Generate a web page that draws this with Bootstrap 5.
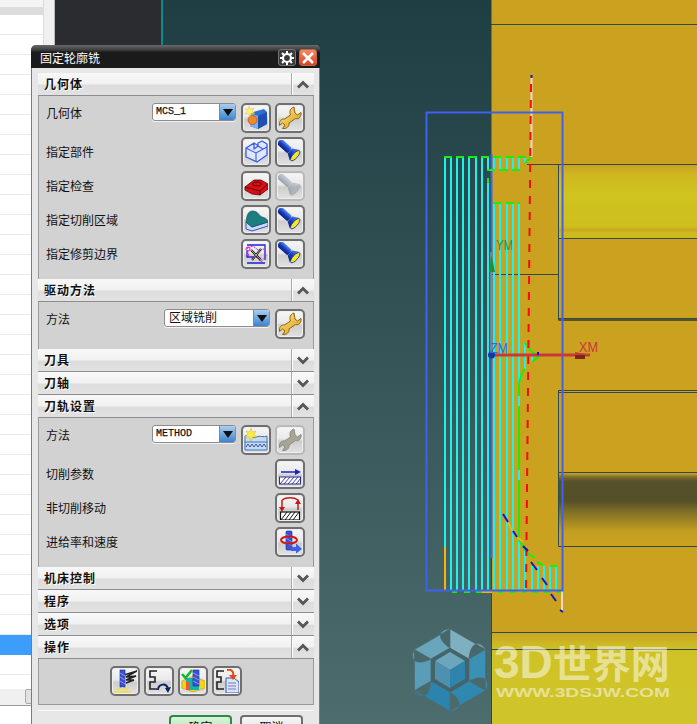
<!DOCTYPE html>
<html lang="zh"><head><meta charset="utf-8"><title>固定轮廓铣</title>
<link href="https://cdn.jsdelivr.net/npm/bootstrap@5.3.0/dist/css/bootstrap.min.css" rel="stylesheet">
<style>
html,body{margin:0;height:100%;overflow:hidden;background:#222}
body{font-family:"Liberation Sans","Noto Sans CJK SC",sans-serif;font-size:12px;color:#111}
.desk{position:relative;width:697px;height:724px;overflow:hidden}
.tree{width:43px;background:#fff;flex:none}
.tree-head{height:15px;background:linear-gradient(#f4f4f4 0 7px,#dcdcdc 7px)}
.tree-rows{height:674px;background:repeating-linear-gradient(#fff 0 19px,#e9e9e9 19px 20px);padding-top:620px}
.tree-sel{height:20px;background:#3d9dfb}
.tree-bar{height:17px;background:#f0f0f0;border-bottom:1px solid #999;padding-left:25px}
.tree-thumb{width:12px;height:15px;background:#e2e2e2;border:1px solid #aaa;border-radius:2px}
.tree-strip{width:12px;flex:none;background:#f0f0f0;border-right:1px solid #bbb;border-left:1px solid #ddd}
.dark-col{width:108px;flex:none;background:#2a2c2f;border-right:2px solid #0b8a90}
.viewport{background:linear-gradient(#1f3e43,#4d6c6d)}
.viewport svg{display:block}
.dlg{position:absolute;left:31px;top:45px;width:289px;height:690px;background:#e7e7e7;border:1px solid #7c7c7c;border-top:0;border-radius:5px 5px 0 0}
.dlg-title{height:23px;margin:0 -1px;padding:5px 3px 0 9px;color:#fff;border-radius:5px 5px 0 0;background:linear-gradient(#6a6a6a,#3c3c3c 5px,#303030 6px,#1a1a1a 7px,#1a1a1a);line-height:1}
.dlg-title span{padding-top:3px;font-size:12px}
.tbtn{width:18px;height:17px;border-radius:3px;margin-top:-1px}
.tbtn-gear{background:#3a3a3a;border:1px solid #777}
.tbtn-close{background:linear-gradient(#f58a60,#e0401e);border:1px solid #b86a50;margin-left:3px}
.dlg-inner{margin:5px 5px 0 6px}
.sec-head{height:23px;background:linear-gradient(#f8f8f8,#f1f1f1 50%,#dcdcdc 55%,#e2e2e2);border-bottom:1px solid #8d8d8d;font-weight:700;letter-spacing:1px;padding-left:6px}
.sec-head .ttl{text-shadow:1px 1px 0 #fff;padding-top:2px}
.sec-chev{width:23px;height:22px;border-left:1px solid #a8a8a8;box-shadow:inset 1px 0 0 #fff}
.sec-body{background:#d2d2d2;border-left:1px solid #9a9a9a;border-right:1px solid #9a9a9a;padding:7px 8px 10px 7px}
.sec-last{border-bottom:1px solid #9a9a9a;padding-bottom:8px}
.ro{height:30px;margin-bottom:4px;gap:4px}
.ro:last-child{margin-bottom:0}
.lbl{flex-grow:1;padding-top:1px}
.lbl-up{position:relative;top:-5px}
.tool{width:30px;height:30px;padding:0;border:2px solid #6f6f6f;border-radius:5px;background:linear-gradient(#f6f6f6,#e9e9e9 45%,#cdcdcd 55%,#e2e2e2);box-shadow:0 0 0 1px #eee inset;flex:none;--bs-btn-disabled-opacity:1}
.tool:disabled{border-color:#b9b9b9}
.tool svg{display:block;margin:1px}
.combo{height:18px;background:#fff;border:1px solid #8c8c8c;border-radius:3px;box-shadow:0 1px 0 #f2f2f2;align-self:flex-start;margin-right:1px;overflow:hidden}
.combo-a{width:84px}.combo-b{width:106px}
.combo-t{flex-grow:1;padding-left:3px;font:400 10px/16px "Liberation Mono",monospace;-webkit-text-stroke:.25px #111}
.combo-c{flex-grow:1;padding-left:4px;font-size:12px;line-height:17px}
.combo-arr{width:16px;background:linear-gradient(#a9cdf1,#3d84cf);border-left:1px solid #5a8fc8}
.foot{margin-top:5px;border-top:1px solid #f8f8f8;padding:4px 11px 0 0;gap:8px}
.act{width:63px;height:26px;padding:0;border-radius:4px;border:2px solid #6f6f6f;font-size:12px;line-height:20px;color:#111;background:linear-gradient(#f6f6f6,#dcdcdc)}
.act-ok{border-color:#2c8a48;background:linear-gradient(#d8f3d8,#a9dfae)}
</style></head>
<body>
<svg width="0" height="0" class="d-block position-absolute">
<defs>
<linearGradient id="gBlue" x1="0" y1="0" x2="0" y2="1"><stop offset="0" stop-color="#5b8cf0"/><stop offset=".5" stop-color="#1b3fc0"/><stop offset="1" stop-color="#0a1f80"/></linearGradient>
<linearGradient id="gGold" x1="0" y1="0" x2="1" y2="1"><stop offset="0" stop-color="#ffe88a"/><stop offset="1" stop-color="#d99a10"/></linearGradient>
<linearGradient id="gGray" x1="0" y1="0" x2="0" y2="1"><stop offset="0" stop-color="#c4cad4"/><stop offset="1" stop-color="#8d93a0"/></linearGradient>
<linearGradient id="gYel" x1="0" y1="0" x2="0" y2="1">
<stop offset="0" stop-color="#cba21f"/><stop offset=".15" stop-color="#cfb820"/><stop offset=".4" stop-color="#cfc420"/><stop offset=".85" stop-color="#cdbe1c"/><stop offset=".89" stop-color="#c8a620"/><stop offset=".93" stop-color="#cdba1e"/><stop offset="1" stop-color="#cdba1e"/></linearGradient>
<linearGradient id="gDark" x1="0" y1="0" x2="0" y2="1">
<stop offset="0" stop-color="#c9a422"/><stop offset=".06" stop-color="#7a6a28"/><stop offset=".12" stop-color="#56502a"/><stop offset=".38" stop-color="#54502a"/><stop offset=".55" stop-color="#857326"/><stop offset=".8" stop-color="#c39f20"/><stop offset="1" stop-color="#cba21f"/></linearGradient>
<linearGradient id="gLow" x1="0" y1="0" x2="0" y2="1"><stop offset="0" stop-color="#c9a420"/><stop offset=".2" stop-color="#cfc226"/><stop offset="1" stop-color="#cfc52a"/></linearGradient>
<symbol id="i-wrench" viewBox="0 0 24 24"><path d="M16 1C12.500 2 11 5.500 12.500 9L6.500 13C3 12.500 1 15.500 1.500 19.500L4.500 17L7 19L4.500 22.500C8.500 23 11.500 20.500 11 17L17.500 12.500C21 13.500 23.500 10.500 23 6.500L19.500 9L17 7Z" fill="url(#gGold)" stroke="#8a6510"/></symbol>
<symbol id="i-wrench-off" viewBox="0 0 24 24"><path d="M16 1C12.500 2 11 5.500 12.500 9L6.500 13C3 12.500 1 15.500 1.500 19.500L4.500 17L7 19L4.500 22.500C8.500 23 11.500 20.500 11 17L17.500 12.500C21 13.500 23.500 10.500 23 6.500L19.500 9L17 7Z" fill="#a8a598" stroke="#8f8c80"/></symbol>
<symbol id="i-torch" viewBox="0 0 24 24"><g transform="translate(12 11) rotate(42)"><rect x="-15" y="-3.500" width="15" height="7" rx="2" fill="url(#gBlue)"/><path d="M0-3.500L6-7V7L0 3.500Z" fill="url(#gBlue)"/><ellipse cx="7" cy="0" rx="2.500" ry="6.500" fill="#f7e52a" stroke="#0e2a90" stroke-width=".8"/></g></symbol>
<symbol id="i-torch-off" viewBox="0 0 24 24"><g transform="translate(12 11) rotate(42)" opacity=".85"><rect x="-15" y="-3.500" width="15" height="7" rx="2" fill="url(#gGray)"/><path d="M0-3.500L7-7.500V7.500L0 3.500Z" fill="url(#gGray)"/><ellipse cx="7.500" cy="0" rx="2.500" ry="7" fill="#a9aeb8"/></g></symbol>
<symbol id="i-mcs" viewBox="0 0 24 24"><path d="M6 7L20 3L23 6V18L14 23L6 20Z" fill="#2f6fd0"/><path d="M6 7L14 10V23L6 20Z" fill="#7fb0ee"/><path d="M14 10L23 6V18L14 23Z" fill="#1e4fb0"/><circle cx="8.500" cy="14" r="4.500" fill="#ef8a2a" stroke="#a24a10" stroke-width=".6"/><path d="M5 0L6.500 3.500L10 2L8 5.500L11 7.500L7 7.500L6 11L4.500 7.500L1 8L3.500 5L1 2.500L4.500 3.500Z" fill="#fff36a" stroke="#d8b820" stroke-width=".4"/></symbol>
<symbol id="i-part" viewBox="0 0 24 24"><path d="M2 8L10 3V9L14 6V3L18 1L23 4V15L13 22L2 17Z" fill="#dfe6fb" stroke="#3a5ae8" stroke-width="1.300" stroke-linejoin="round"/><path d="M2 8L12 13L23 7M12 13V22M10 3L14 5.500M14 6L19 9" fill="none" stroke="#3a5ae8" stroke-width="1.100"/></symbol>
<symbol id="i-red" viewBox="0 0 24 24"><path d="M1 13L10 6H17L24 10V15L16 21L8 20L1 16Z" fill="#d80f14" stroke="#5a0508" stroke-width=".8"/><path d="M1 13L16 17L24 10M16 17V21" fill="none" stroke="#5a0508" stroke-width=".9"/><ellipse cx="13" cy="10" rx="4.500" ry="2" fill="none" stroke="#60080a"/></symbol>
<symbol id="i-surf" viewBox="0 0 24 24"><path d="M2 14V21L8 23L24 18V14L8 19Z" fill="#cfd8f5" stroke="#3a50d0"/><path d="M2 14C3 5 5 3 9 3C14 3 15 8 18 9C21 10 23 10 24 14L8 19Z" fill="#1c7f7f" stroke="#0c4f50" stroke-width=".6"/></symbol>
<symbol id="i-trim" viewBox="0 0 24 24"><path d="M3 3H21V18M3 21H21M3 9V15H9" fill="none" stroke="#1a22d8" stroke-width="1.300"/><path d="M3 6L9 4L14 8L20 7L22 14L17 20L12 15L5 15Z" fill="none" stroke="#e020c8" stroke-width="1" stroke-dasharray="2.500 1"/><circle cx="4" cy="7" r="2" fill="none" stroke="#e020c8"/><path d="M7 8L17 18M17 7L8 18" stroke="#111" stroke-width="2"/><path d="M7 8L17 18M17 7L8 18" stroke="#fff" stroke-width=".6"/></symbol>
<symbol id="i-meth" viewBox="0 0 24 24"><path d="M1 8C5 6 7 11 12 9C17 7 19 10 23 8V22H1Z" fill="#c9d9ee" stroke="#3a74c0"/><path d="M1 14H23" stroke="#3a74c0"/><path d="M2 19L4 16L6 19L8 16L10 19L12 16L14 19L16 16L18 19L20 16L22 19" fill="none" stroke="#2a5ab0"/><path d="M7 0L8.500 4L12 3L10 6.500L13 9L9 9L7 13L5.500 9L1 9L4 6L2 3L5.500 4Z" fill="#ffe93a" stroke="#b8b03a" stroke-width=".4"/></symbol>
<symbol id="i-cut" viewBox="0 0 24 24"><path d="M3 10H19" stroke="#1a22c8" stroke-width="1.500"/><path d="M17 7L23 10L17 13Z" fill="#1a22c8"/><rect x="1.500" y="15" width="21" height="7" fill="#fff" stroke="#2a2a90"/><path d="M2 22L8 15M6 22L12 15M10 22L16 15M14 22L20 15M18 22L23 16" stroke="#2a2a90" stroke-width=".9"/></symbol>
<symbol id="i-non" viewBox="0 0 24 24"><path d="M4 4V14M20 4V14M4 4C8 1 16 1 20 4" fill="none" stroke="#c81818" stroke-width="1.500"/><path d="M1 11H7L4 16ZM17 8L23 8L20 3Z" fill="#c81818"/><rect x="2.500" y="16" width="19" height="8" fill="#fff" stroke="#111" stroke-width="1.200"/><path d="M3 24L9 16M7 24L13 16M11 24L17 16M15 24L21 16" stroke="#111" stroke-width="1"/></symbol>
<symbol id="i-feed" viewBox="0 0 24 24"><rect x="8" y="1" width="6" height="19" rx="1" fill="#3a50d8" stroke="#1a2a90" stroke-width=".6"/><path d="M8 4L14 8M8 8L14 12M8 12L14 16" stroke="#8fa2f0" stroke-width=".8"/><ellipse cx="11" cy="10" rx="8" ry="3.500" fill="none" stroke="#d01818" stroke-width="2"/><rect x="13" y="17" width="6" height="4" fill="#3a62e8"/><path d="M18 13.500L24 19L18 23.500Z" fill="#3a62e8"/></symbol>
<symbol id="i-gen" viewBox="0 0 24 24"><path d="M11 6L24 2L13 8L23 7L13 11L21 11L13 14" fill="none" stroke="#222" stroke-width="1.500"/><rect x="7" y="1" width="5" height="17" fill="#3a50d8" stroke="#1a2a90" stroke-width=".6"/><path d="M7 4L12 7M7 8L12 11M7 12L12 15" stroke="#9fb0f0" stroke-width=".8"/><path d="M9.500 18V21M4 21L7 19M15 21L12 19M1 23H18" stroke="#f2e030" stroke-width="1.600"/></symbol>
<symbol id="i-rep" viewBox="0 0 24 24"><path d="M10 2H3V8H8V13H3V20H10" fill="none" stroke="#222" stroke-width="1.600"/><path d="M11 21C11 15 20 13 21 20" fill="none" stroke="#0a2060" stroke-width="2"/><path d="M18 19L24 18L21 24Z" fill="#0a2060"/></symbol>
<symbol id="i-ver" viewBox="0 0 24 24"><path d="M1 12L12 7L24 12V19L12 23L1 19Z" fill="#f4d41a" stroke="#c49a10" stroke-width=".6"/><rect x="5" y="9" width="13" height="12" fill="#1ab0b0"/><rect x="5" y="13" width="4" height="8" fill="#e6602a"/><rect x="12" y="1" width="6" height="16" fill="#3a50d8" stroke="#1a2a90" stroke-width=".6"/><path d="M12 4L18 7M12 8L18 11M12 12L18 15" stroke="#9fb0f0" stroke-width=".8"/><path d="M1 5L4.500 9L11 1" fill="none" stroke="#10b828" stroke-width="2.500"/></symbol>
<symbol id="i-list" viewBox="0 0 24 24"><path d="M9 2H2V8H6V13H2V20H9" fill="none" stroke="#222" stroke-width="1.600"/><path d="M11 9H19L24 13V24H11Z" fill="#dde3f5" stroke="#3a5ab0"/><path d="M13 14H21M13 17H21M13 20H21" stroke="#6a80c0"/><path d="M12 1C17 0 19 3 18 7" fill="none" stroke="#e04a18" stroke-width="2"/><path d="M14 6H22L18 11Z" fill="#e04a18"/></symbol>
</defs></svg>

<div class="desk d-flex">
  <div class="tree">
    <div class="tree-head"></div>
    <div class="tree-rows"><div class="tree-sel"></div></div>
    <div class="tree-bar"><div class="tree-thumb"></div></div>
  </div>
  <div class="tree-strip"></div>
  <div class="dark-col"></div>
  <div class="viewport flex-grow-1">
    <svg width="534" height="724" viewBox="163 0 534 724" fill="none">
      <rect x="491.500" y="0" width="206" height="724" fill="#cba21f"/>
      <rect x="559" y="165" width="138" height="73" fill="url(#gYel)"/>
      <rect x="559" y="319" width="138" height="2" fill="#5c5226"/>
      <rect x="559" y="473" width="138" height="73" fill="url(#gDark)"/>
      <rect x="491.500" y="632" width="206" height="92" fill="url(#gLow)"/>
      <path d="M491 24.500H697M527 164.500H697M558.500 164V320.500M558.500 238.500H697M491 274.500H558M558.500 318.500H697M558.500 390V546.500M558.500 390.500H697M558.500 392.500H697M558.500 472.500H697M558.500 546.500H697M491 632.500H697M491 649.500H697M491.500 558V724" stroke="#2c4a50"/>
      <path d="M491.500 154V558" stroke="#4060f0" stroke-width="2"/>
      <path d="M491 252V355" stroke="#a8a878"/>
      <path d="M445 157V547M451 157V590M457 157V590M463 157V590M469 157V590M476 157V590M482 157V590M488 157V170M488 183V590M494 157V170M494 203V590M500 157V170M500 203V590M507 157V170M507 203V590M513 157V170M513 203V590M519 157V170M519 203V590M525 157V163M525 343V370M525 550V590M532 352V362M532 566V590M538 566V590M544 566V590M550 566V590M556 566V590" stroke="#1cf2ee" stroke-width="2"/>
      <path d="M445 547V590M482 592H492" stroke="#f2b410" stroke-width="2"/>
      <path d="M444 157H452M456 157H464M468 157H477M481 157H489M493 157H501M506 157H514M518 157H526M525 163L532 157M487 170H495M499 170H508M512 170H520M488 178V183M493 203H501M506 203H514M518 203H520M519 383V396M519 406V470M519 480V540M519 383L522 373L525 369M525 343L532 352L538 357L532 362M519 540L527 553L535 558M537 562L543 565M550 566H557M452 592H457M464 592H470M476 592H482M498 592H503M510 592H516M522 592H526M532 592H538M544 592H550M557 592H561" stroke="#16ee10" stroke-width="2"/>
      <path d="M531.500 77V157M562 591V612" stroke="#f3d8c4" stroke-width="2"/>
      <path d="M531 84L526 590" stroke="#f40c0c" stroke-width="2" stroke-dasharray="8 8"/>
      <path d="M508 522L512 531M517 537L523 542" stroke="#f2b410" stroke-width="2"/>
      <path d="M503 514L508 522M513 531L517 537M523 546L528 551M531 562L537 570M542 578L547 585M551 594L556 601M560 610L563 612M531.500 75V78" stroke="#1414d0" stroke-width="2"/>
      <path d="M426.500 112.500H562.500V590.500H426.500Z" stroke="#4060f0" stroke-width="2"/>
      <path d="M489 272L491.500 255L495 272Z" fill="#2f8a34"/>
      <text x="496" y="250" font-family="Liberation Sans" font-size="14" fill="#2f9040" textLength="17" lengthAdjust="spacingAndGlyphs">YM</text>
      <path d="M491 355H590" stroke="#c83a3a" stroke-width="3"/>
      <path d="M575 352L591 355L575 358Z" fill="#c83a3a"/><rect x="575" y="355" width="10" height="4" fill="#7a2818"/>
      <circle cx="491.500" cy="355" r="3.500" fill="#1438a0"/>
      <text x="490" y="353" font-family="Liberation Sans" font-size="14" fill="#1e70f0" textLength="18" lengthAdjust="spacingAndGlyphs">ZM</text>
      <text x="579" y="352" font-family="Liberation Sans" font-size="14" fill="#c8383a" textLength="19" lengthAdjust="spacingAndGlyphs">XM</text>
      <rect x="537" y="352" width="2" height="3" fill="#1414d0"/>
      <g transform="translate(450 670)">
        <g stroke="#4d6f78" stroke-width=".7" stroke-linejoin="round">
          <path d="M0-41L35.500-20.500C30-30 20-28 19-11L0-22Z" fill="#7fb0c0"/>
          <path transform="rotate(60)" d="M0-41L35.500-20.500C30-30 20-28 19-11L0-22Z" fill="#3a90b5"/>
          <path transform="rotate(120)" d="M0-41L35.500-20.500C30-30 20-28 19-11L0-22Z" fill="#2e88b0"/>
          <path transform="rotate(180)" d="M0-41L35.500-20.500C30-30 20-28 19-11L0-22Z" fill="#2a84ae"/>
          <path transform="rotate(240)" d="M0-41L35.500-20.500C30-30 20-28 19-11L0-22Z" fill="#5a9db8"/>
          <path transform="rotate(300)" d="M0-41L35.500-20.500C30-30 20-28 19-11L0-22Z" fill="#6aa6bb"/>
        </g>
        <path d="M0-22L19-11V11L0 22L-19 11V-11Z" fill="#44646a"/>
        <path d="M0-18L15-9L0 0L-15-9Z" fill="#6da6bc"/>
        <path d="M-15-9L0 0V18L-15 9Z" fill="#4e90b0"/>
        <path d="M15-9L0 0V18L15 9Z" fill="#2e84ac"/>
      </g>
      <text x="494" y="678" font-family="Liberation Sans,Noto Sans CJK SC,sans-serif" font-weight="700" fill="#fff" fill-opacity=".5"><tspan font-size="46">3D</tspan><tspan font-size="39">世界网</tspan></text>
      <text x="496" y="697" font-family="Liberation Sans" font-weight="700" font-size="12" fill="#fff" fill-opacity=".5" textLength="174" lengthAdjust="spacingAndGlyphs">WWW.3DSJW.COM</text>
    </svg>
  </div>

  <div class="dlg">
    <div class="dlg-title d-flex align-items-start">
      <span class="flex-grow-1">固定轮廓铣</span>
      <div class="tbtn tbtn-gear d-flex align-items-center justify-content-center"><svg width="14" height="14" viewBox="0 0 14 14"><circle cx="7" cy="7" r="4" fill="none" stroke="#fff" stroke-width="2.200"/><path d="M7 0V3M7 11V14M0 7H3M11 7H14M2 2L4 4M10 10L12 12M12 2L10 4M2 12L4 10" stroke="#fff" stroke-width="2"/></svg></div>
      <div class="tbtn tbtn-close d-flex align-items-center justify-content-center"><svg width="12" height="12" viewBox="0 0 12 12"><path d="M1 1L11 11M11 1L1 11" stroke="#fff" stroke-width="2.600"/></svg></div>
    </div>
    <div class="dlg-inner">
      <div class="sec-head d-flex align-items-center justify-content-between"><span class="ttl">几何体</span><span class="sec-chev d-flex align-items-center justify-content-center"><svg width="14" height="9" viewBox="0 0 14 9"><path d="M2 7.500L7 2.500L12 7.500" fill="none" stroke="#555" stroke-width="2.800"/></svg></span></div>
      <div class="sec-body">
        <div class="ro d-flex align-items-center"><span class="lbl lbl-up">几何体</span><div class="combo combo-a d-flex"><span class="combo-t">MCS_1</span><span class="combo-arr d-flex align-items-center justify-content-center"><svg width="12" height="7" viewBox="0 0 12 7"><path d="M1 0H11L6 7Z" fill="#111"/></svg></span></div><button class="btn tool"><svg width="24" height="24"><use href="#i-mcs"/></svg></button><button class="btn tool"><svg width="24" height="24"><use href="#i-wrench"/></svg></button></div>
        <div class="ro d-flex align-items-center"><span class="lbl">指定部件</span><button class="btn tool"><svg width="24" height="24"><use href="#i-part"/></svg></button><button class="btn tool"><svg width="24" height="24"><use href="#i-torch"/></svg></button></div>
        <div class="ro d-flex align-items-center"><span class="lbl">指定检查</span><button class="btn tool"><svg width="24" height="24"><use href="#i-red"/></svg></button><button class="btn tool" disabled><svg width="24" height="24"><use href="#i-torch-off"/></svg></button></div>
        <div class="ro d-flex align-items-center"><span class="lbl">指定切削区域</span><button class="btn tool"><svg width="24" height="24"><use href="#i-surf"/></svg></button><button class="btn tool"><svg width="24" height="24"><use href="#i-torch"/></svg></button></div>
        <div class="ro d-flex align-items-center"><span class="lbl">指定修剪边界</span><button class="btn tool"><svg width="24" height="24"><use href="#i-trim"/></svg></button><button class="btn tool"><svg width="24" height="24"><use href="#i-torch"/></svg></button></div>
      </div>
      <div class="sec-head d-flex align-items-center justify-content-between"><span class="ttl">驱动方法</span><span class="sec-chev d-flex align-items-center justify-content-center"><svg width="14" height="9" viewBox="0 0 14 9"><path d="M2 7.500L7 2.500L12 7.500" fill="none" stroke="#555" stroke-width="2.800"/></svg></span></div>
      <div class="sec-body">
        <div class="ro d-flex align-items-center"><span class="lbl lbl-up">方法</span><div class="combo combo-b d-flex"><span class="combo-c">区域铣削</span><span class="combo-arr d-flex align-items-center justify-content-center"><svg width="12" height="7" viewBox="0 0 12 7"><path d="M1 0H11L6 7Z" fill="#111"/></svg></span></div><button class="btn tool"><svg width="24" height="24"><use href="#i-wrench"/></svg></button></div>
      </div>
      <div class="sec-head d-flex align-items-center justify-content-between"><span class="ttl">刀具</span><span class="sec-chev d-flex align-items-center justify-content-center"><svg width="14" height="9" viewBox="0 0 14 9"><path d="M2 1.500L7 6.500L12 1.500" fill="none" stroke="#555" stroke-width="2.800"/></svg></span></div>
      <div class="sec-head d-flex align-items-center justify-content-between"><span class="ttl">刀轴</span><span class="sec-chev d-flex align-items-center justify-content-center"><svg width="14" height="9" viewBox="0 0 14 9"><path d="M2 1.500L7 6.500L12 1.500" fill="none" stroke="#555" stroke-width="2.800"/></svg></span></div>
      <div class="sec-head d-flex align-items-center justify-content-between"><span class="ttl">刀轨设置</span><span class="sec-chev d-flex align-items-center justify-content-center"><svg width="14" height="9" viewBox="0 0 14 9"><path d="M2 7.500L7 2.500L12 7.500" fill="none" stroke="#555" stroke-width="2.800"/></svg></span></div>
      <div class="sec-body">
        <div class="ro d-flex align-items-center"><span class="lbl lbl-up">方法</span><div class="combo combo-a d-flex"><span class="combo-t">METHOD</span><span class="combo-arr d-flex align-items-center justify-content-center"><svg width="12" height="7" viewBox="0 0 12 7"><path d="M1 0H11L6 7Z" fill="#111"/></svg></span></div><button class="btn tool"><svg width="24" height="24"><use href="#i-meth"/></svg></button><button class="btn tool" disabled><svg width="24" height="24"><use href="#i-wrench-off"/></svg></button></div>
        <div class="ro d-flex align-items-center"><span class="lbl">切削参数</span><button class="btn tool"><svg width="24" height="24"><use href="#i-cut"/></svg></button></div>
        <div class="ro d-flex align-items-center"><span class="lbl">非切削移动</span><button class="btn tool"><svg width="24" height="24"><use href="#i-non"/></svg></button></div>
        <div class="ro d-flex align-items-center"><span class="lbl">进给率和速度</span><button class="btn tool"><svg width="24" height="24"><use href="#i-feed"/></svg></button></div>
      </div>
      <div class="sec-head d-flex align-items-center justify-content-between"><span class="ttl">机床控制</span><span class="sec-chev d-flex align-items-center justify-content-center"><svg width="14" height="9" viewBox="0 0 14 9"><path d="M2 1.500L7 6.500L12 1.500" fill="none" stroke="#555" stroke-width="2.800"/></svg></span></div>
      <div class="sec-head d-flex align-items-center justify-content-between"><span class="ttl">程序</span><span class="sec-chev d-flex align-items-center justify-content-center"><svg width="14" height="9" viewBox="0 0 14 9"><path d="M2 1.500L7 6.500L12 1.500" fill="none" stroke="#555" stroke-width="2.800"/></svg></span></div>
      <div class="sec-head d-flex align-items-center justify-content-between"><span class="ttl">选项</span><span class="sec-chev d-flex align-items-center justify-content-center"><svg width="14" height="9" viewBox="0 0 14 9"><path d="M2 1.500L7 6.500L12 1.500" fill="none" stroke="#555" stroke-width="2.800"/></svg></span></div>
      <div class="sec-head d-flex align-items-center justify-content-between"><span class="ttl">操作</span><span class="sec-chev d-flex align-items-center justify-content-center"><svg width="14" height="9" viewBox="0 0 14 9"><path d="M2 7.500L7 2.500L12 7.500" fill="none" stroke="#555" stroke-width="2.800"/></svg></span></div>
      <div class="sec-body sec-last d-flex justify-content-center gap-1">
        <button class="btn tool"><svg width="24" height="24"><use href="#i-gen"/></svg></button>
        <button class="btn tool"><svg width="24" height="24"><use href="#i-rep"/></svg></button>
        <button class="btn tool"><svg width="24" height="24"><use href="#i-ver"/></svg></button>
        <button class="btn tool"><svg width="24" height="24"><use href="#i-list"/></svg></button>
      </div>
      <div class="foot d-flex justify-content-end">
        <button class="btn act act-ok">确定</button>
        <button class="btn act">取消</button>
      </div>
    </div>
  </div>
</div>
</body></html>
